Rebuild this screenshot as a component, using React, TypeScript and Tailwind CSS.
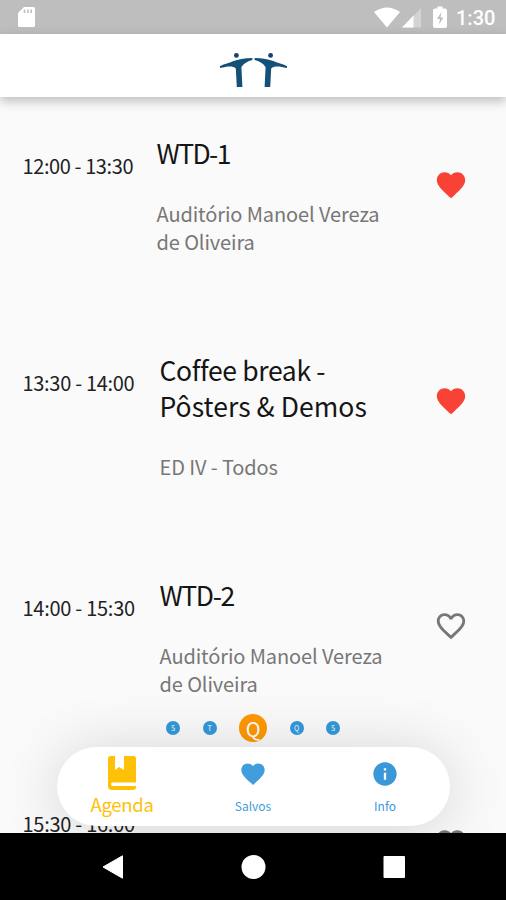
import { MdFavorite, MdFavoriteBorder, MdInfo } from "react-icons/md";

type Line = { text: string; tracking: string };

type Session = {
  time: string;
  title: Line[];
  place: string[];
  saved: boolean;
  column: string;
  timeTracking: string;
};

const sessions: Session[] = [
  { time: "12:00 - 13:30", title: [{ text: "WTD-1", tracking: "tracking-[-1.6px]" }], place: ["Auditório Manoel Vereza", "de Oliveira"], saved: true, column: "w-[134px]", timeTracking: "tracking-[-0.4px]" },
  { time: "13:30 - 14:00", title: [{ text: "Coffee break -", tracking: "tracking-[-0.35px]" }, { text: "Pôsters & Demos", tracking: "tracking-[0.05px]" }], place: ["ED IV - Todos"], saved: true, column: "w-[137px]", timeTracking: "tracking-[-0.3px]" },
  { time: "14:00 - 15:30", title: [{ text: "WTD-2", tracking: "tracking-[-1.4px]" }], place: ["Auditório Manoel Vereza", "de Oliveira"], saved: false, column: "w-[137px]", timeTracking: "tracking-[-0.27px]" },
  { time: "15:30 - 16:00", title: [{ text: "Coffee break", tracking: "tracking-[-0.35px]" }], place: ["ED IV - Todos"], saved: false, column: "w-[137px]", timeTracking: "tracking-[-0.27px]" },
];

function StatusBar() {
  return (
    <div className="flex h-[34px] shrink-0 items-center bg-[#bebebe] pl-[18px] pr-[11px]">
      <svg width="17" height="20" viewBox="0 0 17 20">
        <path d="M6 0H15.5Q17 0 17 1.5V18.5Q17 20 15.5 20H1.5Q0 20 0 18.5V6Z" fill="#fff" />
        <path d="M6.5 2.5V6M10 2.5V6M13.2 2.5V6" stroke="#bebebe" strokeWidth="1.6" />
      </svg>
      <div className="flex-1" />
      <svg width="75" height="22" viewBox="0 0 75 22">
        <path d="M1 6Q14 -3 27 6L14 21.5Z" fill="#fff" />
        <path d="M48 2V21.5H29Z" fill="#d4d4d4" />
        <path d="M40.5 9.5V21.5H29Z" fill="#fff" />
        <path d="M64.5 0.5H69.5V2.5H72Q74 2.5 74 4V20Q74 22 72 22H62Q60 22 60 20V4Q60 2.5 62 2.5H64.5Z" fill="#fff" />
        <path d="M68.5 6L64 13H67L66 18.5L70.5 11.5H67.5Z" fill="#bebebe" />
      </svg>
      <span className="ml-[8px] mt-[2px] w-[39px] whitespace-nowrap font-[Roboto,sans-serif] text-[20px] font-medium leading-none text-white">1:30</span>
    </div>
  );
}

function Logo() {
  return (
    <svg width="70" height="38" viewBox="0 0 70 38">
      <defs>
        <g id="person">
          <circle cx="18.4" cy="3.4" r="2.4" fill="#173f70" />
          <path d="M1.8 14.2C7 11.4 11 11 15 9.2C20 7.2 26 6.2 34.4 6V8C29.6 9 26.4 11 23.4 15L24.4 35H18.8L17.8 16.4C15 13.4 9 14.2 2.2 16Z" fill="#155078" />
        </g>
      </defs>
      <use href="#person" />
      <use href="#person" transform="translate(71 0) scale(-1 1)" />
    </svg>
  );
}

function SessionRow({ session }: { session: Session }) {
  return (
    <div className="flex pb-[96.5px] pl-[22px] pr-[38.5px]">
      <div className={`shrink-0 whitespace-nowrap pl-[0.5px] pt-[13px] text-[20px] leading-[34px] text-[#222] ${session.timeTracking} ${session.column}`}>{session.time}</div>
      <div className="ml-[0.5px] flex-1 whitespace-nowrap">
        <div className="-mt-[0.75px] mb-[28.25px]">
          {session.title.map((line) => (
            <div key={line.text} className={`text-[26.5px] leading-[36.5px] text-[#151515] ${line.tracking}`}>{line.text}</div>
          ))}
        </div>
        {session.place.map((line) => (
          <div key={line} className="text-[20px] leading-[28px] tracking-[-0.11px] text-[#777]">{line}</div>
        ))}
      </div>
      <div className="shrink-0 pt-[31.5px]">
        {session.saved ? <MdFavorite size={34} color="#f84235" /> : <MdFavoriteBorder size={34} color="#777" />}
      </div>
    </div>
  );
}

function DayDot({ label }: { label: string }) {
  return <span className="flex size-[14px] items-center justify-center rounded-full bg-[#3498db] text-[7px] font-medium leading-none text-[#d5ebfa]">{label}</span>;
}

function BottomMenu() {
  return (
    <div className="absolute inset-x-0 bottom-0 flex flex-col items-center pb-[7px]">
      <div className="flex items-center gap-[22.5px] pl-[0.5px]">
        <DayDot label="S" />
        <DayDot label="T" />
        <span className="flex size-[28px] items-center justify-center rounded-full bg-[#ff9800] pt-[2px] text-[20px] leading-none text-white">Q</span>
        <DayDot label="Q" />
        <DayDot label="S" />
      </div>
      <div className="mt-[5px] flex h-[79px] w-[393px] rounded-[40px] bg-white shadow-[0_4px_60px_rgba(0,0,0,0.16)]">
        <div className="flex w-[131px] flex-col items-center pt-[9px] text-[#ffc107]">
          <svg width="28" height="34" viewBox="0 0 28 34">
            <path fillRule="evenodd" d="M3 0H7V14L11.2 11L16 14V0H25.5Q28 0 28 2.5V26.5H4.5Q3 26.5 3 28.2T4.5 30H28V32Q27.5 34 25 34H4Q0 34 0 30V3Q0 0 3 0Z" fill="currentColor" />
          </svg>
          <span className="mt-[4px] text-[18.5px] leading-[21px] tracking-[-0.3px]">Agenda</span>
        </div>
        <div className="flex w-[131px] flex-col items-center pt-[13px] text-[#429ddc]">
          <MdFavorite size={28} />
          <span className="mt-[9.5px] text-[12px] leading-[16px]">Salvos</span>
        </div>
        <div className="flex w-[131px] flex-col items-center pt-[13px] pl-[2px] text-[#3b98d8]">
          <MdInfo size={28} />
          <span className="mt-[9.5px] text-[12px] leading-[16px]">Info</span>
        </div>
      </div>
    </div>
  );
}

export default function App() {
  return (
    <div className="flex h-[900px] w-[506px] flex-col overflow-hidden bg-[#fafafa] font-['Noto_Sans_CJK_SC','Noto_Sans',sans-serif]">
      <StatusBar />
      <header className="z-10 flex h-[63px] shrink-0 justify-center bg-white pt-[18px] shadow-[0_4px_10px_rgba(0,0,0,0.25)]">
        <Logo />
      </header>
      <main className="relative min-h-0 flex-1 overflow-hidden">
        <div className="pt-[39px]">
          {sessions.map((session) => (
            <SessionRow key={session.time} session={session} />
          ))}
        </div>
        <BottomMenu />
      </main>
      <nav className="flex h-[67px] shrink-0 items-center justify-center bg-black">
        <svg width="304" height="24" viewBox="0 0 304 24">
          <path d="M2 12L21.5 0.8V23.2Z" fill="#fff" stroke="#fff" strokeLinejoin="round" />
          <circle cx="152.5" cy="12" r="12" fill="#fff" />
          <rect x="282.5" y="1" width="21.5" height="22" rx="1" fill="#fff" />
        </svg>
      </nav>
    </div>
  );
}
